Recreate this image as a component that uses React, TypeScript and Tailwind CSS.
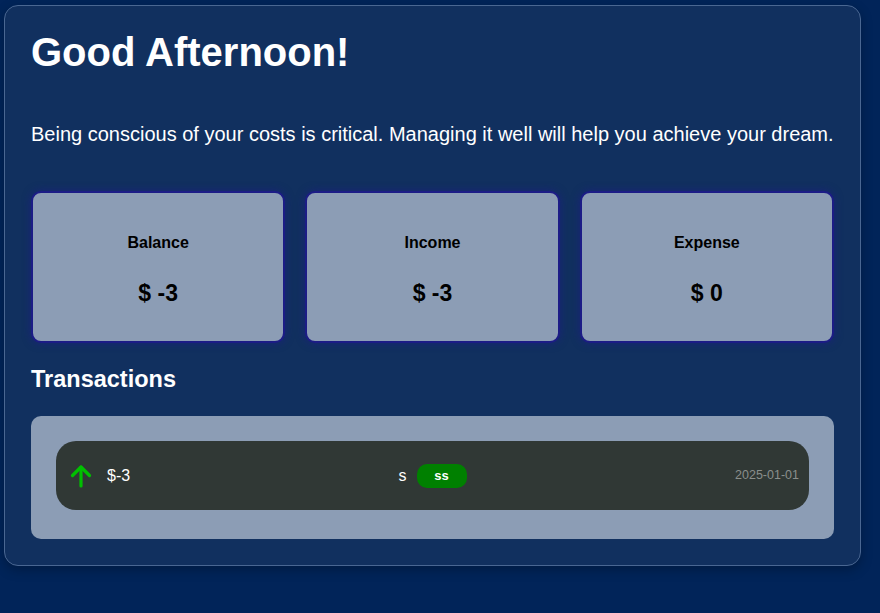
const stats = [
  { label: 'Balance', value: '$ -3' },
  { label: 'Income', value: '$ -3' },
  { label: 'Expense', value: '$ 0' },
]

const transactions = [{ amount: '$-3', note: 's', tag: 'ss', date: '2025-01-01' }]

function ArrowUp() {
  return (
    <svg width="24" height="26" viewBox="0 0 24 26" fill="none" stroke="#00c000" strokeWidth="3.2" strokeLinecap="round" strokeLinejoin="round">
      <path d="M12 23V4" />
      <path d="M3.5 12.5L12 4l8.5 8.5" />
    </svg>
  )
}

export default function App() {
  return (
    <div className="min-h-[613px] bg-[#012459] pt-[5px] pl-[4px] pb-[40px] font-['Liberation_Sans',Arial,sans-serif]">
      <div className="w-[857px] rounded-[14px] border-[1.5px] border-[#4a6792] bg-[#11305f] px-[26px] pt-[23px] pb-[26px] shadow-[0_4px_12px_rgba(0,0,0,0.25)]">
        <h1 className="text-[40px] leading-[46px] font-bold text-white">Good Afternoon!</h1>
        <p className="mt-[48px] text-[20px] leading-[23px] text-white">
          Being conscious of your costs is critical. Managing it well will help you achieve your dream.
        </p>

        <div className="mt-[45px] grid grid-cols-3 gap-[20px]">
          {stats.map((stat) => (
            <div
              key={stat.label}
              className="flex h-[152px] flex-col items-center justify-center gap-[27px] rounded-[10px] border-2 border-[#1c1c86] bg-[#8c9db5] pt-[6px] shadow-[0_0_8px_rgba(28,28,134,0.7)]"
            >
              <span className="text-[16px] leading-[18px] font-bold text-black">{stat.label}</span>
              <span className="text-[23px] leading-[28px] font-bold text-black">{stat.value}</span>
            </div>
          ))}
        </div>

        <h2 className="mt-[24px] text-[23.5px] leading-[25px] font-bold text-white">Transactions</h2>

        <div className="mt-[24px] rounded-[10px] bg-[#8c9db5] px-[25px] pt-[25px] pb-[29px]">
          {transactions.map((t) => (
            <div key={t.date} className="flex h-[69px] items-center justify-between rounded-[20px] bg-[#303835] px-[10px]">
              <div className="flex items-center gap-[14px] pl-[3px]">
                <ArrowUp />
                <span className="text-[16px] text-white">{t.amount}</span>
              </div>
              <div className="flex items-center gap-[10px]">
                <span className="text-[16px] text-white">{t.note}</span>
                <span className="flex h-[24px] w-[50px] items-center justify-center rounded-[10px] bg-[#008000] text-[13px] font-bold text-white">
                  {t.tag}
                </span>
              </div>
              <span className="text-[12.5px] text-[#8a8f8c]">{t.date}</span>
            </div>
          ))}
        </div>
      </div>
    </div>
  )
}
